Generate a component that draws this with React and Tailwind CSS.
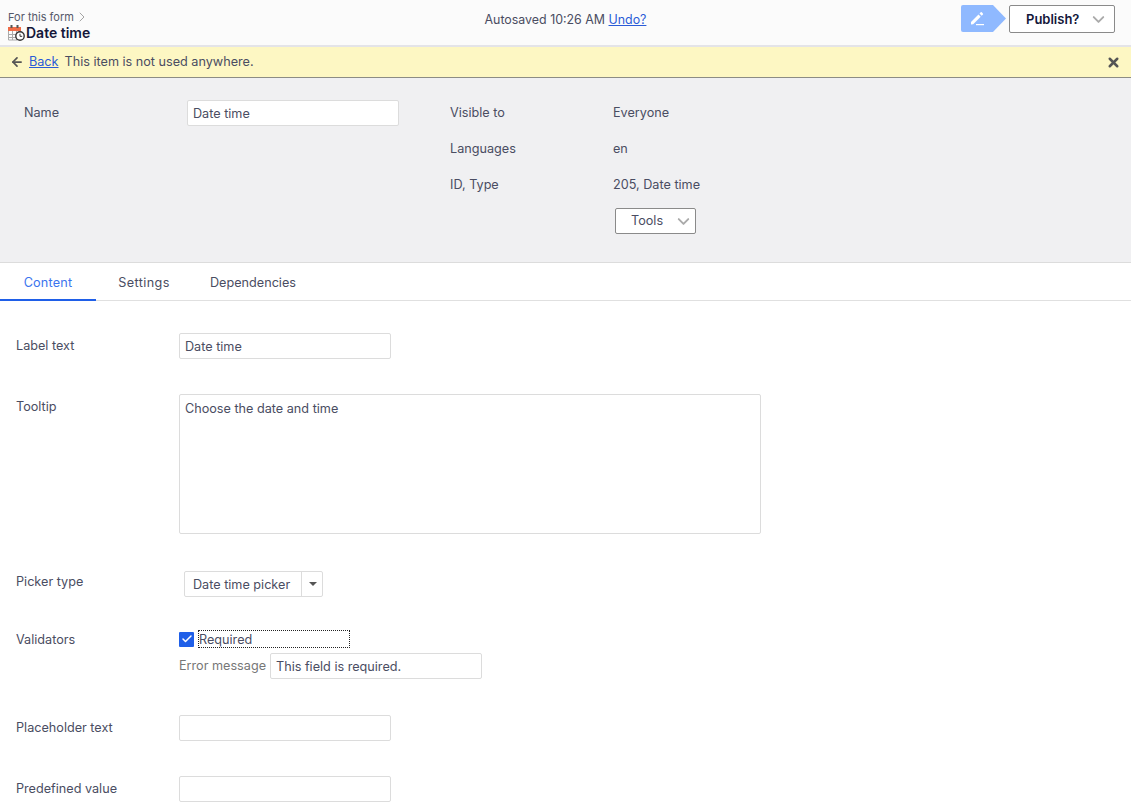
import { ChevronRight, ChevronDown, ArrowLeft, X, Check } from 'lucide-react';

const font = "font-['Inter','Noto_Sans',sans-serif]";

const CalendarClock = () => (
  <svg width="17" height="17" viewBox="0 0 17 17" className="shrink-0">
    <rect x="0" y="3" width="13" height="4" fill="#ef6c47" />
    <rect x="2.5" y="1" width="2" height="3" fill="#555" />
    <rect x="8.5" y="1" width="2" height="3" fill="#555" />
    <path d="M0.5 7v9h9M4.5 7v9M8.5 7v9M12.5 7v2M0.5 10.5h9M0.5 13.5h8" fill="none" stroke="#aaa" strokeWidth="1" />
    <circle cx="12" cy="12" r="4.2" fill="#fff" stroke="#333" strokeWidth="1.4" />
    <path d="M12 9.8v2.5h2.2" fill="none" stroke="#333" strokeWidth="1" />
  </svg>
);

const PencilIcon = () => (
  <svg width="15" height="15" viewBox="0 0 15 15">
    <path d="M1 11l7.5-7.5 2.2 2.2L3.2 13.2 1 13.5z" fill="#fff" />
    <path d="M9.5 2.5l1.2-1.2a.8.8 0 0 1 1.1 0l1.1 1.1a.8.8 0 0 1 0 1.1l-1.2 1.2z" fill="#fff" />
    <rect x="6" y="13" width="8" height="1.2" fill="#fff" />
  </svg>
);

const TextBox = ({ value, className = '' }) => (
  <div className={`flex h-[26px] items-center rounded-[2px] border border-[#dcdcdc] bg-white px-[5px] pt-[2px] text-[12.65px] text-[#4a4d62] ${className}`}>
    {value}
  </div>
);

const FormRow = ({ label, className = '', labelClass = 'pt-[4px]', children }) => (
  <div className={`flex items-start ${className}`}>
    <div className={`w-[163px] shrink-0 text-[12.65px] leading-[18px] text-[#4a4d62] ${labelClass}`}>{label}</div>
    <div>{children}</div>
  </div>
);

const InfoRow = ({ label, value }) => (
  <div className="flex h-[36px] items-center text-[12.65px] text-[#4a4d62]">
    <span className="w-[163px]">{label}</span>
    <span>{value}</span>
  </div>
);

const App = () => {
  return (
    <div className={`h-[810px] w-[1131px] overflow-hidden bg-white ${font}`}>
      <header className="grid h-[47px] grid-cols-[1fr_auto_1fr] items-start border-b-2 border-[#e4e4e8] bg-[#fbfbfb] px-4">
        <div className="-ml-2 pt-[10px]">
          <div className="flex items-center text-[11px] leading-[14px] text-[#55586a]">
            For this form
            <ChevronRight size={16} strokeWidth={1} className="-my-px text-[#777]" />
          </div>
          <div className="flex items-center gap-px text-[14px] font-semibold leading-[16px] text-[#14173a]">
            <CalendarClock />
            Date time
          </div>
        </div>
        <div className="pt-[11px] text-[12.4px] leading-[18px] text-[#4a4d62]">
          Autosaved 10:26 AM <a className="text-[#2a5bd7] underline">Undo?</a>
        </div>
        <div className="flex items-start justify-end gap-[3px] pt-[5px]">
          <div className="flex h-[27px] w-[45px] items-center justify-center rounded-l-[2px] bg-[#8fb9ff] pr-[12px] [clip-path:polygon(0_0,71%_0,100%_50%,71%_100%,0_100%)]">
            <PencilIcon />
          </div>
          <button className="flex h-[28px] w-[106px] items-center justify-between rounded-[2px] border border-[#8a8a8a] bg-white pl-4 pr-[6px] text-[13px] font-semibold text-[#14173a]">
            <span className="pt-px">Publish?</span>
            <ChevronDown size={19} strokeWidth={2.4} className="text-[#aaa]" />
          </button>
        </div>
      </header>

      <div className="flex h-[31px] items-center justify-between border-b border-[#8c8c84] bg-[#fdf7c3] px-[10px] text-[12.65px] text-[#4a4d62]">
        <div className="flex items-center">
          <ArrowLeft size={14} strokeWidth={3} className="mr-[5px] text-[#555]" />
          <a className="mr-[6px] text-[#2a5bd7] underline">Back</a>
          This item is not used anywhere.
        </div>
        <X size={15} strokeWidth={4} className="text-[#555]" />
      </div>

      <section className="flex h-[185px] items-start border-b border-[#dcdcdc] bg-[#f0f0f2] pl-6 pt-[17px]">
        <div className="flex w-[426px] items-start pt-[5px]">
          <span className="w-[163px] text-[12.65px] leading-[26px] text-[#4a4d62]">Name</span>
          <TextBox value="Date time" className="w-[212px]" />
        </div>
        <div>
          <InfoRow label="Visible to" value="Everyone" />
          <InfoRow label="Languages" value="en" />
          <InfoRow label="ID, Type" value="205, Date time" />
          <button className="ml-[165px] mt-[5px] flex h-[26px] w-[81px] items-center justify-between rounded-[2px] border border-[#8a8a8a] bg-white pl-[15px] pr-[2px] text-[12.65px] text-[#4a4d62]">
            Tools
            <ChevronDown size={19} strokeWidth={2.4} className="text-[#aaa]" />
          </button>
        </div>
      </section>

      <nav className="flex h-[38px] items-stretch border-b border-[#e0e0e0] text-[12.65px] text-[#4a4d62]">
        <div className="-mb-px flex w-[96px] items-center justify-center border-b-2 border-[#1f5fe8] pt-[4px] tracking-[0.2px] text-[#3b74ee]">Content</div>
        <div className="flex w-[96px] items-center justify-center pt-[3px] tracking-[0.4px]">Settings</div>
        <div className="flex items-center pl-[18px] pt-[3px]">Dependencies</div>
      </nav>

      <main className="pl-4 pt-[32px]">
        <FormRow label="Label text" className="h-[61px]">
          <TextBox value="Date time" className="w-[212px]" />
        </FormRow>
        <FormRow label="Tooltip" className="h-[177px]">
          <div className="h-[140px] w-[582px] rounded-[2px] border border-[#dcdcdc] bg-white p-[5px] pt-[6px] text-[12.65px] leading-[16px] text-[#4a4d62]">
            Choose the date and time
          </div>
        </FormRow>
        <FormRow label="Picker type" labelClass="pt-[2px]" className="h-[61px]">
          <div className="ml-[5px] flex h-[26px] w-[139px] items-center rounded-[2px] border border-[#dcdcdc] bg-white text-[12.65px] text-[#4a4d62]">
            <span className="flex h-full w-[117px] items-center border-r border-[#dcdcdc] pl-2 pt-[2px]">Date time picker</span>
            <span className="ml-[7px] h-0 w-0 border-x-[4px] border-t-[4px] border-x-transparent border-t-[#555]" />
          </div>
        </FormRow>
        <FormRow label="Validators" labelClass="-mt-px" className="h-[83px]">
          <div className="-mt-[2px] flex h-[18px] items-center gap-[4px]">
            <span className="flex h-[15px] w-[15px] items-center justify-center rounded-[1px] bg-[#1f5fe8]">
              <Check size={12} strokeWidth={3} className="text-white" />
            </span>
            <span className="h-[18px] w-[152px] border border-dotted border-[#222] text-[12.65px] leading-[17px] text-[#4a4d62]">Required</span>
          </div>
          <div className="mt-[5px] flex items-center gap-[3px]">
            <span className="w-[88px] whitespace-nowrap pt-px text-[12.65px] text-[#777]">Error message</span>
            <TextBox value="This field is required." className="w-[212px]" />
          </div>
        </FormRow>
        <FormRow label="Placeholder text" className="h-[61px]">
          <TextBox value="" className="w-[212px]" />
        </FormRow>
        <FormRow label="Predefined value">
          <TextBox value="" className="w-[212px]" />
        </FormRow>
      </main>
    </div>
  );
};

export default App;
